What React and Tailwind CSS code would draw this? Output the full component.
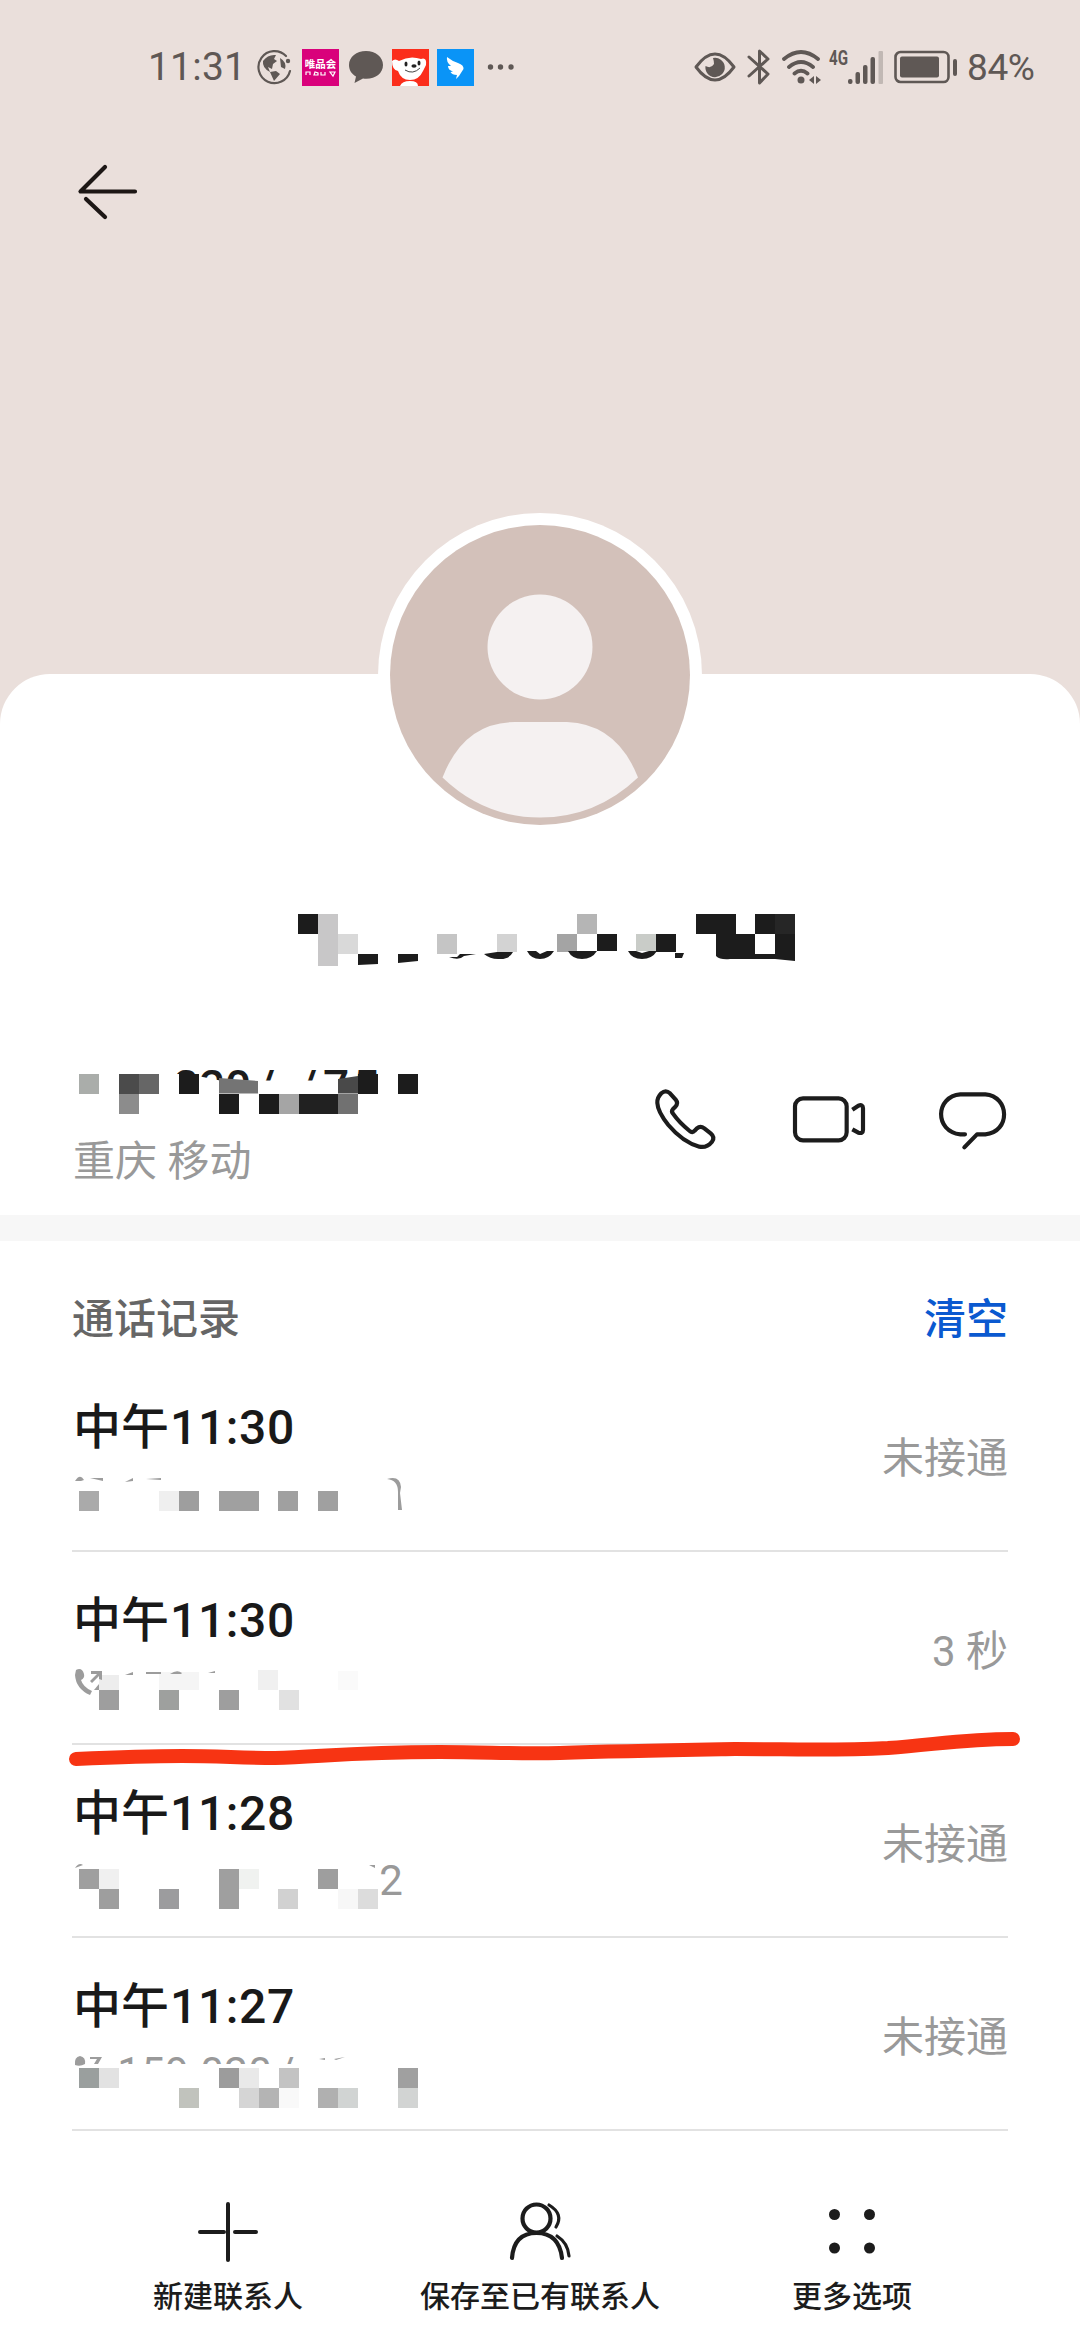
import React from "react";

const INK = "#1c1c1c";

const calls = [
  {
    time: "11:30",
    result: "未接通",
    viewBox: "72 1469 340 64",
    cells: [
      [79, 1491, 20, 20, "#aaaaaa"],
      [159, 1491, 20, 20, "#efefef"],
      [179, 1491, 20, 20, "#9e9e9e"],
      [219, 1491, 40, 20, "#a0a0a0"],
      [278, 1491, 20, 20, "#a0a0a0"],
      [318, 1491, 20, 20, "#a0a0a0"],
    ],
    scraps: [
      "M75 1481q5 -8 9 -1l-3 1z",
      "M90 1478l13 0v3z",
      "M125 1482l8 -4v3z",
      "M146 1479l15 -1v2z",
      "M387 1479q13 -4 14 8l-1 6 2 17h-4l0 -18q0 -12 -11 -13z",
    ],
  },
  {
    time: "11:30",
    result: "3 秒",
    viewBox: "72 1662 340 64",
    cells: [
      [99, 1675, 20, 15, "#ededed"],
      [159, 1672, 40, 18, "#f5f5f5"],
      [258, 1670, 20, 20, "#f0f0f0"],
      [338, 1671, 20, 19, "#fafafa"],
      [99, 1690, 20, 20, "#9e9e9e"],
      [159, 1690, 20, 20, "#9ea09e"],
      [219, 1690, 20, 20, "#9e9e9e"],
      [279, 1690, 20, 20, "#e1e1e1"],
    ],
    scraps: [
      "M76 1670q6 -3 8 4q1 4 -3 6q2 7 11 11l-2 4q-14 -6 -15 -20z",
      "M91 1671h11v9l-3 -1v-3l-7 7 -2 -2 7 -7h-6z",
      "M94 1690l5 -6v6z",
      "M125 1675l8 -3v3z",
      "M146 1672h15v2h-15z",
      "M170 1674q7 -5 12 -1l-1 1z",
      "M208 1673l7 -2v2z",
    ],
  },
  {
    time: "11:28",
    result: "未接通",
    viewBox: "72 1855 340 64",
    cells: [
      [79, 1869, 20, 20, "#9f9f9f"],
      [99, 1869, 20, 20, "#f0f0f0"],
      [99, 1889, 20, 20, "#9e9e9e"],
      [159, 1889, 20, 20, "#9c9c9e"],
      [219, 1869, 20, 40, "#9f9f9f"],
      [239, 1869, 20, 20, "#f0f2f0"],
      [278, 1889, 20, 20, "#d1d1d1"],
      [318, 1869, 20, 20, "#9e9e9e"],
      [338, 1889, 20, 20, "#f7f7f7"],
      [358, 1889, 20, 20, "#dcdcdc"],
    ],
    scraps: ["M75 1868q4 -6 8 -3z", "M369 1865h6v3z"],
    text: [["2", 391]],
    baseline: 1895,
    clip: [380, 1860, 30, 40],
  },
  {
    time: "11:27",
    result: "未接通",
    viewBox: "72 2048 340 64",
    cells: [
      [79, 2068, 20, 20, "#9a9f9e"],
      [99, 2068, 20, 20, "#e2e2e2"],
      [219, 2068, 20, 20, "#9c9c9c"],
      [239, 2068, 20, 20, "#e9e9e9"],
      [279, 2068, 20, 20, "#c3c3c3"],
      [398, 2068, 20, 20, "#a0a0a0"],
      [179, 2088, 20, 20, "#c1c3bd"],
      [239, 2088, 20, 20, "#d5d5d5"],
      [259, 2088, 20, 20, "#b4b4b4"],
      [279, 2088, 20, 20, "#f9f9f9"],
      [318, 2088, 20, 20, "#b0b0b0"],
      [338, 2088, 20, 20, "#d1d4d3"],
      [398, 2088, 20, 20, "#d2d4d3"],
    ],
    scraps: [
      "M75 2065q-1 -8 5 -9q6 1 5 8q-5 3 -10 1z",
      "M90 2057h12l-4 7h-4l3 -5h-7z",
      "M319 2059l6 -1v2z",
      "M334 2059l11 -2l-9 3z",
    ],
    text: [["1", 129], ["5", 153], ["9", 177], ["0", 212], ["2", 236], ["0", 260], ["/", 286]],
    baseline: 2087,
    clip: [110, 2050, 200, 14],
  },
];

const nameCells = [
  [298, 914, 20, 20, INK],
  [318, 914, 20, 52, "#c8c7c8"],
  [338, 934, 20, 20, "#d9d9d9"],
  [437, 934, 20, 20, "#c5c5c5"],
  [497, 934, 20, 18, "#d3d3d3"],
  [577, 914, 20, 20, "#b5b5b5"],
  [557, 934, 20, 18, "#a4a4a4"],
  [597, 934, 20, 17, INK],
  [636, 934, 20, 17, "#c9ccc8"],
  [656, 934, 20, 18, INK],
  [696, 914, 40, 20, INK],
  [716, 934, 39, 22, INK],
  [755, 914, 20, 20, INK],
  [775, 914, 20, 20, "#262626"],
  [775, 934, 20, 22, INK],
];

const nameScraps = [
  "M358 954h20v10l-20 1z",
  "M398 954h20v7l-20 2z",
  "M449 957l8 0 3 -3 16 0 -12 2q-5 5 -15 1z",
  "M484 954l13 -2h16q-4 8 -15 7q-8 0 -14 -5z",
  "M527 951l9 0 4 3 7 -3h7q-5 8 -14 8t-13 -8z",
  "M568 951h29q-5 8 -15 8t-14 -8z",
  "M628 951l8 0 6 2 7 -2h8q-5 8 -15 8t-14 -8z",
  "M675 953h9l-2 5h-7z",
  "M716 954h79v7l-20 -2h-45q-10 1 -14 -3z",
];

const phoneCells = [
  [79, 1073.5, 20, 20, "#aaadaa"],
  [119, 1073.5, 20, 20, "#4b4b4b"],
  [139, 1073.5, 20, 20, "#666666"],
  [119, 1093.5, 20, 20, "#8c8c8c"],
  [179, 1073.5, 20, 20, INK],
  [219, 1093.5, 20, 20, INK],
  [259, 1093.5, 20, 20, INK],
  [279, 1093.5, 20, 20, "#a5a5a5"],
  [299, 1093.5, 39, 20, "#212121"],
  [338, 1093.5, 20, 20, "#717171"],
  [358, 1073.5, 20, 20, INK],
  [398, 1073.5, 20, 20, INK],
];

function Cells({ cells }) {
  return cells.map(([x, y, w, h, fill], i) => (
    <rect key={i} x={x} y={y} width={w} height={h} fill={fill} shapeRendering="crispEdges" />
  ));
}

function StatusBar() {
  return (
    <div className="flex h-[134px] items-center pr-[43px] pl-[148px] text-[#5f5855]">
      <span className="w-[108px] text-[39px] leading-none tracking-[0.2px]">11:31</span>
      {/* globe */}
      <svg className="h-9 w-9" viewBox="0 0 36 36" fill="none">
        <path d="M30 7A16 16 0 1 0 34 22" stroke="currentColor" strokeWidth="2.2" strokeLinecap="round" />
        <path d="M7 12Q12 5 20 6L18 10 21 12 17 15 16 20 12 18 14 23Q6 19 7 12zM24 9Q31 13 29 20L25 18zM14 23L20 22 24 25 18 32Z" fill="currentColor" />
        <circle cx="32" cy="12" r="2.2" fill="currentColor" />
      </svg>
      <svg className="ml-[10px] h-[37px] w-[37px]" viewBox="0 0 37 37">
        <rect width="37" height="37" fill="#d9017b" />
        <text x="18.5" y="18.5" textAnchor="middle" fontSize="10.5" fontWeight="700" fill="#fff">唯品会</text>
        <path d="M4 26v-3h4v3M12 26l1 -3 3 1v2zM19 23v3h4v-3M28 23h5l-2 4z" stroke="#fff" strokeWidth="1.2" fill="none" />
      </svg>
      <svg className="ml-[10px] h-[34px] w-[34px]" viewBox="0 0 34 34" fill="currentColor">
        <path d="M17 1C7.500 1 0 7 0 15c0 5 2.500 9 7 11.500L5.500 33 14 28.500C25 30 34 24 34 15 34 7 26.500 1 17 1z" />
      </svg>
      {/* dog mascot */}
      <svg className="ml-[9px] h-[37px] w-[37px]" viewBox="0 0 37 37">
        <rect width="37" height="37" fill="#fb2d1b" />
        <path d="M0 12Q3 9 7 12Q18 6 29 10Q35 8 34 16L31 22Q27 31 18 31Q9 31 6 22Q0 21 0 12zM8 37Q10 32 18 32T26 37z" fill="#fff" />
        <ellipse cx="14" cy="15" rx="1.500" ry="2.500" fill="#222" />
        <ellipse cx="27" cy="14" rx="1.500" ry="2.500" fill="#222" />
        <ellipse cx="22" cy="17" rx="2.600" ry="1.800" fill="#222" />
        <path d="M13 21Q21 26 28 19" stroke="#444" fill="none" />
      </svg>
      {/* wing */}
      <svg className="ml-2 h-[37px] w-[37px]" viewBox="0 0 37 37">
        <rect width="37" height="37" fill="#0a94f7" />
        <path d="M10 8Q15 12 21 14Q27 16 26.500 20L22 27 19 30 20 26Q15 26 13.500 23L16 22.500Q11 21 11 17L14 17Q9 13 10 8z" fill="#fff" />
      </svg>
      <svg className="ml-[13px] h-[6px] w-[28px]" viewBox="0 0 28 6" fill="currentColor">
        <circle cx="3.500" cy="3" r="2.700" /><circle cx="13.500" cy="3" r="2.700" /><circle cx="24" cy="3" r="2.700" />
      </svg>

      <div className="ml-auto flex items-center">
        <svg className="h-[30px] w-[42px]" viewBox="0 0 42 30" fill="none">
          <path d="M2 15Q21 -11 40 15Q21 41 2 15z" stroke="currentColor" strokeWidth="3" strokeLinejoin="round" />
          <path d="M19 6A9.700 9.700 0 1 1 11.500 14Q17 17 20 12Q20 9 19 6z" fill="currentColor" />
        </svg>
        <svg className="ml-[11px] h-[38px] w-[24px]" viewBox="0 0 24 38" fill="none" stroke="currentColor" strokeWidth="3" strokeLinejoin="round" strokeLinecap="round">
          <path d="M2 9L21 26 12.500 35V3L21 11 2 28" />
        </svg>
        <svg className="ml-[11px] h-[36px] w-[40px]" viewBox="0 0 40 36" fill="none" stroke="currentColor" strokeWidth="3.800" strokeLinecap="round">
          <path d="M2 10Q19 -4 36 10M7 18Q19 8 31 18M12.500 24.500Q19 19 25.500 24.500" />
          <circle cx="19" cy="31" r="3.500" fill="currentColor" stroke="none" />
          <path d="M27 31l5 -4v8zM39 31l-5 -4v8z" fill="currentColor" stroke="none" />
        </svg>
        <svg className="ml-[7px] h-[38px] w-[55px] overflow-visible" viewBox="0 0 55 38" fill="currentColor">
          <text x="0" y="17" fontSize="20" fontWeight="700" textLength="19" lengthAdjust="spacingAndGlyphs">4G</text>
          <rect x="19" y="31" width="4.500" height="5" rx="2" />
          <rect x="26.500" y="24" width="4.500" height="12" rx="2" />
          <rect x="34" y="17" width="4.500" height="19" rx="2" />
          <rect x="41.500" y="9" width="4.500" height="27" rx="2" />
          <rect x="49.500" y="3" width="4.500" height="33" rx="1" fill="#c1b8b4" />
        </svg>
        <svg className="ml-[10px] h-[34px] w-[64px]" viewBox="0 0 64 34" fill="none">
          <rect x="1.500" y="2" width="53" height="30" rx="5" stroke="currentColor" strokeWidth="2.600" />
          <rect x="6" y="6.500" width="39" height="21" rx="2" fill="currentColor" />
          <rect x="59" y="9" width="4" height="17" rx="2" fill="currentColor" />
        </svg>
        <span className="ml-[9px] w-[70px] text-[37px] leading-none tracking-[-0.4px]">84%</span>
      </div>
    </div>
  );
}

function Avatar() {
  return (
    <svg className="absolute -top-[162px] left-1/2 h-[326px] w-[326px] -translate-x-1/2" viewBox="377 512 326 326">
      <circle cx="540" cy="675" r="162" fill="#fff" />
      <circle cx="540" cy="675" r="150" fill="#d3c1ba" />
      <circle cx="540" cy="647" r="52.500" fill="#f5f1f1" />
      <path d="M442.500 777.500Q464 722 515 722H567Q617 724 638 777.500Q596 817.500 540 817.500T442.500 777.500z" fill="#f5f1f1" />
    </svg>
  );
}

function ContactNumber() {
  return (
    <svg className="h-[56px] w-[360px]" viewBox="72 1062 360 56">
      <defs>
        <clipPath id="number-top">
          <path d="M170 1060H380V1074L340 1080.500H220L198 1076 190 1074H170z" />
        </clipPath>
      </defs>
      <g clipPath="url(#number-top)" fill={INK} fontSize="46" fontWeight="500" textAnchor="middle">
        {[["2", 186], ["2", 212], ["0", 238], ["/", 266], ["/", 308], ["7", 336], ["5", 366]].map(([ch, x], i) => (
          <text key={i} x={x} y="1103">{ch}</text>
        ))}
      </g>
      <Cells cells={phoneCells} />
      <path d="M219 1078L258 1081V1093.500H219z" fill="#747474" />
      <path d="M338 1079L358 1076V1093.500H338z" fill="#494949" />
    </svg>
  );
}

function CallRow({ call, index }) {
  return (
    <li className="flex h-[193px] items-center justify-between border-b-2 border-[#e2e2e2]">
      <div className="flex h-full flex-col pt-[39px]">
        <div className="flex h-[60px] items-center pl-[1px] text-[48px] leading-none font-medium text-[#191919]">
          <span className="w-[97px]">中午</span>
          <span className="tracking-[0.6px]">{call.time}</span>
        </div>
        <svg className="mt-[11px] h-[64px] w-[340px] overflow-visible" viewBox={call.viewBox}>
          <Cells cells={call.cells} />
          {call.scraps.map((d) => <path key={d} d={d} fill="#9c9c9c" />)}
          {call.text && (
            <>
              <clipPath id={`call-${index}`}>
                <rect x={call.clip[0]} y={call.clip[1]} width={call.clip[2]} height={call.clip[3]} />
              </clipPath>
              <g clipPath={`url(#call-${index})`} fill="#999" fontSize="42" textAnchor="middle">
                {call.text.map(([ch, x]) => <text key={x} x={x} y={call.baseline}>{ch}</text>)}
              </g>
            </>
          )}
        </svg>
      </div>
      <span className="pt-2 text-[42px] leading-none text-[#999999]">{call.result}</span>
    </li>
  );
}

function BottomBar() {
  return (
    <nav className="flex h-[209px] pt-[65px] text-[30px] leading-none font-medium text-[#1c1c1c]">
      <button className="ml-[72px] flex w-[312px] flex-col items-center">
        <svg className="h-[72px] w-[72px]" viewBox="192 2196 72 72" stroke={INK} strokeWidth="4" strokeLinecap="round">
          <path d="M228 2204V2260M200 2232H224M235 2232H256" />
        </svg>
        <span className="mt-[14px]">新建联系人</span>
      </button>
      <button className="flex w-[312px] flex-col items-center">
        <svg className="h-[72px] w-[72px]" viewBox="504 2196 72 72" fill="none" stroke={INK} strokeWidth="4.200" strokeLinecap="round">
          <ellipse cx="536.500" cy="2218.500" rx="14" ry="14" />
          <path d="M512 2258Q514 2233 536.500 2233T562 2258" />
          <path d="M549 2205Q564 2214 556 2227M557 2236Q568 2243 569 2256" strokeWidth="3.200" />
        </svg>
        <span className="mt-[14px]">保存至已有联系人</span>
      </button>
      <button className="flex w-[312px] flex-col items-center">
        <svg className="h-[72px] w-[72px]" viewBox="816 2196 72 72" fill={INK}>
          <circle cx="834.500" cy="2214.500" r="5.500" />
          <circle cx="869.500" cy="2214.500" r="5.500" />
          <circle cx="834.500" cy="2248" r="5.500" />
          <circle cx="869.500" cy="2248" r="5.500" />
        </svg>
        <span className="mt-[14px]">更多选项</span>
      </button>
    </nav>
  );
}

export default function App() {
  return (
    <div className="relative h-[2340px] w-[1080px] overflow-hidden bg-[#eadfdb] font-[Roboto,'Noto_Sans_CJK_SC',sans-serif]">
      <header className="h-[674px]">
        <StatusBar />
        <svg className="mt-[22px] ml-[72px] h-[72px] w-[72px]" viewBox="72 156 72 72" fill="none" stroke="#1d1715" strokeWidth="4.200" strokeLinecap="round">
          <path d="M105 167L80.500 191.500H135" strokeLinejoin="round" />
          <path d="M86 199L105 217" />
        </svg>
      </header>

      <main className="relative rounded-t-[50px] bg-white">
        <Avatar />
        <section className="flex h-[541px] flex-col pt-[232px]">
          <svg className="ml-[290px] h-[64px] w-[514px]" viewBox="290 906 514 64">
            <Cells cells={nameCells} />
            {nameScraps.map((d) => <path key={d} d={d} fill={INK} />)}
          </svg>
          <div className="mt-[92px] flex justify-between pr-[71px] pl-[72px]">
            <div className="flex flex-col">
              <ContactNumber />
              <span className="mt-[23px] pl-[1px] text-[42px] leading-none text-[#999999]">重庆 移动</span>
            </div>
            <div className="mt-[23px] flex text-[#1c1c1c]">
              <svg className="h-[68px] w-[68px]" viewBox="93 78 204 204" fill="none" stroke="currentColor" strokeWidth="12.500" strokeLinejoin="round">
                <path d="M121 103Q134 91 147 103L164 122Q173 133 163 143L156 150Q150 157 156 164Q174 190 206 216Q214 223 221 215L228 208Q238 199 250 208L269 223Q283 235 273 248Q258 267 235 263Q186 250 142 198Q110 158 109 132Q108 116 121 103z" />
              </svg>
              <svg className="ml-[71px] h-[68px] w-[76px]" viewBox="510 78 228 204" fill="none" stroke="currentColor" strokeWidth="12.500" strokeLinecap="round" strokeLinejoin="round">
                <rect x="522" y="118" width="155" height="126" rx="24" />
                <path d="M694 152L712 140Q726 135 726 148V213Q726 225 712 221L694 211" strokeLinecap="butt" />
              </svg>
              <svg className="ml-[70px] h-[68px] w-[72px]" viewBox="950 78 216 204" fill="none" stroke="currentColor" strokeWidth="12.500" strokeLinecap="round" strokeLinejoin="round">
                <path d="M1034 226H1020C942 218 944 112 1020 106H1095C1169 112 1171 219 1095 226H1070L1032 265" />
              </svg>
            </div>
          </div>
        </section>

        <div className="h-[26px] bg-[#f7f7f7]" />

        <section className="px-[72px]">
          <div className="flex h-[118px] items-center justify-between pt-[40px] text-[42px] leading-none font-medium">
            <h2 className="text-[#666666]">通话记录</h2>
            <button className="text-[#0a59d0]">清空</button>
          </div>
          <ul>
            {calls.map((call, i) => <CallRow key={i} call={call} index={i} />)}
          </ul>
        </section>
        <BottomBar />
      </main>

      {/* hand drawn marker stroke */}
      <svg className="absolute top-[1725px] left-[60px] h-[50px] w-[970px]" viewBox="60 1725 970 50" fill="none">
        <path d="M76 1759C120 1757 150 1756 182 1756C220 1756 240 1758 275 1758C320 1757 350 1752 440 1752C490 1752 510 1754 560 1753C620 1751 680 1750 735 1749C790 1749 830 1751 888 1748C940 1744 965 1739 1013 1739" stroke="#f73413" strokeWidth="14" strokeLinecap="round" />
      </svg>
    </div>
  );
}
